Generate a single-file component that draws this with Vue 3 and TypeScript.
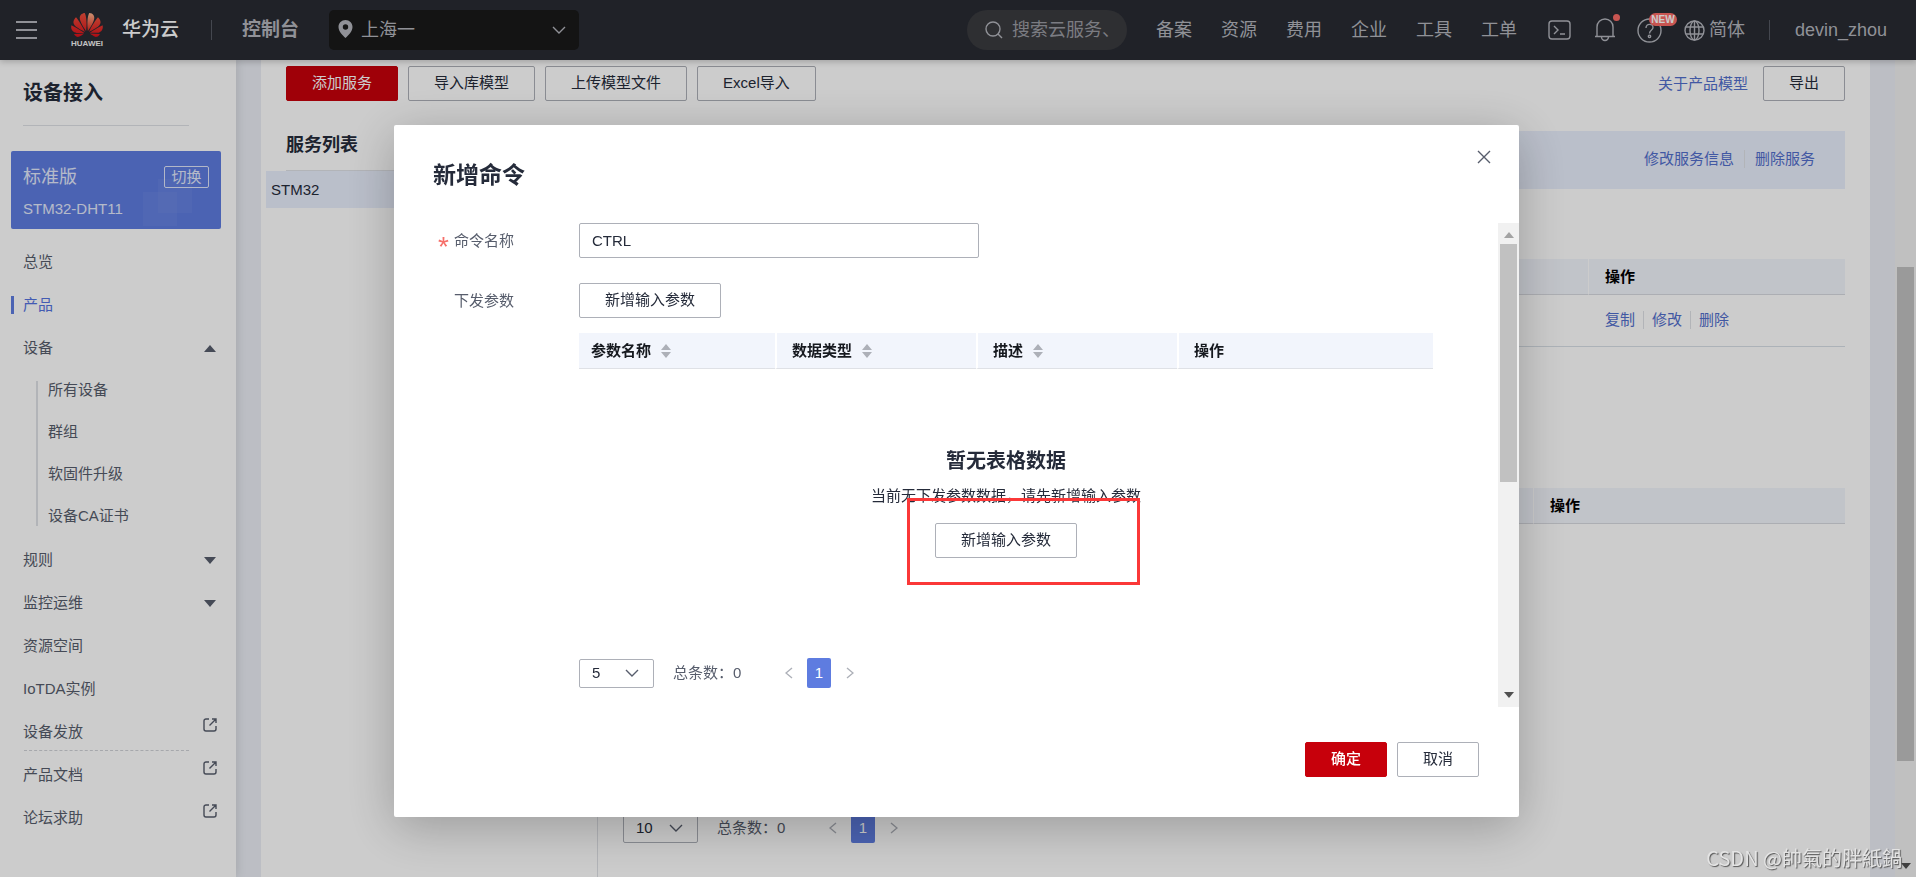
<script setup lang="ts">
import { ref } from 'vue'

interface MenuItem {
  label: string
  active?: boolean
  arrow?: 'up' | 'down'
  external?: boolean
  dashed?: boolean
  children?: string[]
}

const navLinks: string[] = ['备案', '资源', '费用', '企业', '工具', '工单']

const menu: MenuItem[] = [
  { label: '总览' },
  { label: '产品', active: true },
  { label: '设备', arrow: 'up', children: ['所有设备', '群组', '软固件升级', '设备CA证书'] },
  { label: '规则', arrow: 'down' },
  { label: '监控运维', arrow: 'down' },
  { label: '资源空间' },
  { label: 'IoTDA实例' },
  { label: '设备发放', external: true, dashed: true },
  { label: '产品文档', external: true },
  { label: '论坛求助', external: true },
]

const toolbar: string[] = ['导入库模型', '上传模型文件', 'Excel导入']

const paramColumns = [
  { label: '参数名称', sortable: true, cls: 'c-name' },
  { label: '数据类型', sortable: true, cls: 'c-type' },
  { label: '描述', sortable: true, cls: 'c-desc' },
  { label: '操作', sortable: false, cls: 'c-ops' },
]

const region = ref('上海一')
const commandName = ref('CTRL')
const modalPageSize = ref('5')
const pageSize = ref('10')
</script>

<template>
  <div class="shell">
    <header class="topbar">
      <button class="icon-btn burger" aria-label="菜单"><i></i><i></i><i></i></button>
      <a class="brand" href="#">
        <span class="logo">
          <svg viewBox="0 2.9 24 18.2" aria-hidden="true">
            <defs>
              <linearGradient id="petal" x1="0" y1="0" x2="0" y2="1">
                <stop offset="0" stop-color="#f0503c" />
                <stop offset="1" stop-color="#d8101a" />
              </linearGradient>
              <linearGradient id="petal-light" x1="0" y1="0" x2="0" y2="1">
                <stop offset="0" stop-color="#ffb48c" />
                <stop offset="1" stop-color="#e0281e" />
              </linearGradient>
            </defs>
            <path fill="url(#petal)" d="M3.67 6.14S1.82 7.91 1.72 9.78v.35c.08 1.51 1.22 2.4 1.22 2.4 1.83 1.79 6.26 4.04 7.3 4.55 0 0 .06.03.1-.01l.02-.04v-.04C7.52 10.8 3.67 6.14 3.67 6.14zM9.65 18.6c-.02-.08-.1-.08-.1-.08l-7.38.26c.8 1.43 2.15 2.53 3.56 2.2.96-.25 3.16-1.78 3.88-2.3.06-.05.04-.09.04-.09zm.08-.78C6.49 15.63.21 12.28.21 12.28c-.15.46-.2.9-.21 1.3v.07c0 1.07.4 1.82.4 1.82.8 1.69 2.34 2.2 2.34 2.2.7.3 1.4.31 1.4.31.12.02 4.4 0 5.54 0 .05 0 .08-.05.08-.05v-.06c0-.03-.03-.05-.03-.05zM9.06 3.19a3.42 3.42 0 00-2.57 3.15v.41c.03.6.16 1.05.16 1.05.66 2.9 3.86 7.65 4.55 8.65.05.05.1.03.1.03a.1.1 0 00.06-.1c1.06-10.6-1.11-13.42-1.11-13.42-.32.02-1.19.23-1.19.23z" />
            <path fill="url(#petal-light)" d="M17.36 5.46s-.49-1.8-2.44-2.28c0 0-.57-.14-1.17-.22 0 0-2.18 2.81-1.12 13.43.01.07.06.08.06.08.07.03.1-.03.1-.03.72-1.03 3.9-5.76 4.55-8.64 0 0 .36-1.4.02-2.34z" />
            <path fill="url(#petal)" d="M14.44 18.53s-.07 0-.09.05c0 0-.01.07.03.1.7.51 2.85 2 3.88 2.3 0 0 .16.05.43.06h.14c.69-.02 1.9-.37 3-2.26l-7.4-.25zm7.83-8.41c.14-2.06-1.94-3.97-1.94-3.98 0 0-3.85 4.66-6.67 10.8 0 0-.03.08.02.13l.04.01h.06c1.06-.53 5.46-2.77 7.28-4.54 0 0 1.15-.93 1.21-2.42zm1.52 2.14s-6.28 3.37-9.52 5.55c0 0-.05.04-.03.11 0 0 .03.06.07.06 1.16 0 5.56 0 5.67-.02 0 0 .57-.02 1.27-.29 0 0 1.56-.5 2.37-2.27 0 0 .73-1.45.17-3.14z" />
          </svg>
          <b>HUAWEI</b>
        </span>
        <span class="brand-name">华为云</span>
      </a>
      <span class="bar"></span>
      <a class="console" href="#">控制台</a>
      <div class="region">
        <svg class="pin" viewBox="0 0 15 18" aria-hidden="true">
          <path fill="#b4b6bd" fill-rule="evenodd" d="M7.5 0C3.6 0 .5 3.1.5 7c0 4.2 4.2 8.600 7 11 2.800-2.400 7-6.800 7-11 0-3.900-3.100-7-7-7zM7.500 4.300a2.700 2.700 0 1 1 0 5.400 2.700 2.700 0 0 1 0-5.400z" />
        </svg>
        <select v-model="region" aria-label="区域"><option>上海一</option></select>
        <svg class="chev" viewBox="0 0 14 8" aria-hidden="true"><path d="M1 1l6 6 6-6" /></svg>
      </div>

      <div class="top-right">
        <label class="search">
          <svg viewBox="0 0 18 18" aria-hidden="true"><circle cx="8" cy="8" r="7" /><path d="M13 13l4 4" /></svg>
          <input type="text" placeholder="搜索云服务、" aria-label="搜索" />
        </label>
        <nav class="top-nav">
          <a v-for="l in navLinks" :key="l" href="#">{{ l }}</a>
        </nav>
        <button class="icon-btn term" aria-label="命令行">
          <svg viewBox="0 0 23 20"><rect x="1" y="1" width="21" height="18" rx="3" /><path d="M6 6l4 4-4 4M12 14h5" /></svg>
        </button>
        <button class="icon-btn bell" aria-label="消息">
          <svg viewBox="0 0 22 24"><path d="M1 18.500h20M3 18.500V9a8 8 0 0 1 16 0v9.500M7.500 19a3.500 3.500 0 0 0 7 0" /></svg>
          <span class="dot"></span>
        </button>
        <button class="icon-btn help" aria-label="帮助">
          <svg viewBox="0 0 25 25"><circle cx="12.500" cy="12.500" r="11.500" /><path d="M9 10c0-5 7-4.500 7-.5 0 2.500-3.500 2.500-3.500 6" /><circle cx="12.500" cy="18.300" r="1.200" /></svg>
          <span class="new">NEW</span>
        </button>
        <button class="lang">
          <svg viewBox="0 0 21 21" aria-hidden="true"><circle cx="10.500" cy="10.500" r="9.500" /><ellipse cx="10.500" cy="10.500" rx="4.500" ry="9.500" /><path d="M10.500 1v19M2 7h17M2 14h17" /></svg>
          简体
        </button>
        <span class="bar"></span>
        <a class="user" href="#">devin_zhou</a>
      </div>
    </header>

    <div class="body">
      <aside class="sidebar">
        <h1>设备接入</h1>
        <section class="edition">
          <i class="deco d1"></i><i class="deco d2"></i>
          <div class="edition-row">
            <span class="edition-name">标准版</span>
            <button>切换</button>
          </div>
          <p>STM32-DHT11</p>
        </section>
        <nav class="menu">
          <template v-for="m in menu" :key="m.label">
            <a href="#" :class="{ active: m.active, dashed: m.dashed }">
              <span>{{ m.label }}</span>
              <svg v-if="m.arrow" class="tri" :class="m.arrow" viewBox="0 0 12 7" aria-hidden="true"><path d="M0 0h12L6 7z" /></svg>
              <svg v-if="m.external" class="ext" viewBox="0 0 14 14" aria-hidden="true"><path d="M6 1H3a2 2 0 0 0-2 2v8a2 2 0 0 0 2 2h8a2 2 0 0 0 2-2V8M6.500 7.500L13 1M9 1h4v4" /></svg>
            </a>
            <div v-if="m.children" class="submenu">
              <a v-for="c in m.children" :key="c" href="#">{{ c }}</a>
            </div>
          </template>
        </nav>
      </aside>

      <main class="panel">
        <div class="toolbar">
          <button class="btn primary">添加服务</button>
          <button v-for="t in toolbar" :key="t" class="btn">{{ t }}</button>
          <a class="about" href="#">关于产品模型</a>
          <button class="btn">导出</button>
        </div>
        <div class="split">
          <section class="services">
            <h2>服务列表</h2>
            <a class="service" href="#">STM32</a>
          </section>
          <section class="detail">
            <div class="detail-head links">
              <a href="#">修改服务信息</a><a href="#">删除服务</a>
            </div>
            <table class="grid props">
              <thead><tr><th></th><th class="ops">操作</th></tr></thead>
              <tbody>
                <tr>
                  <td></td>
                  <td><span class="links"><a href="#">复制</a><a href="#">修改</a><a href="#">删除</a></span></td>
                </tr>
              </tbody>
            </table>
            <table class="grid cmds">
              <thead><tr><th></th><th class="ops">操作</th></tr></thead>
            </table>
            <div class="pager">
              <span class="size">
                <select v-model="pageSize" aria-label="每页条数"><option>10</option></select>
                <svg viewBox="0 0 14 8" aria-hidden="true"><path d="M1 1l6 6 6-6" /></svg>
              </span>
              <span class="total">总条数：0</span>
              <button class="step" aria-label="上一页"><svg viewBox="0 0 8 12"><path d="M7 1L1 6l6 5" /></svg></button>
              <button class="page">1</button>
              <button class="step" aria-label="下一页"><svg viewBox="0 0 8 12"><path d="M1 1l6 5-6 5" /></svg></button>
            </div>
          </section>
        </div>
      </main>

      <div class="page-scroll">
        <div class="thumb"></div>
        <svg viewBox="0 0 10 6" aria-hidden="true"><path d="M0 0h10L5 6z" /></svg>
      </div>
    </div>

    <div class="mask">
      <section class="modal" role="dialog" aria-labelledby="modal-title">
        <header class="modal-head">
          <h2 id="modal-title">新增命令</h2>
          <button class="close" aria-label="关闭"><svg viewBox="0 0 14 14"><path d="M1 1l12 12M13 1L1 13" /></svg></button>
        </header>
        <div class="modal-body">
          <div class="form">
            <div class="row">
              <label for="cmd-name"><b>*</b>命令名称</label>
              <input id="cmd-name" v-model="commandName" type="text" />
            </div>
            <div class="row params">
              <span class="label">下发参数</span>
              <div class="field">
                <button class="btn">新增输入参数</button>
                <table class="param-table">
                  <thead>
                    <tr>
                      <th v-for="c in paramColumns" :key="c.label" :class="c.cls">
                        {{ c.label }}
                        <svg v-if="c.sortable" viewBox="0 0 10 14" aria-hidden="true"><path d="M5 0l5 6H0zM0 8h10l-5 6z" /></svg>
                      </th>
                    </tr>
                  </thead>
                </table>
                <div class="empty">
                  <h3>暂无表格数据</h3>
                  <p>当前无下发参数数据，请先新增输入参数</p>
                  <button class="btn">新增输入参数</button>
                  <span class="highlight"></span>
                </div>
                <div class="pager">
                  <span class="size">
                    <select v-model="modalPageSize" aria-label="每页条数"><option>5</option></select>
                    <svg viewBox="0 0 14 8" aria-hidden="true"><path d="M1 1l6 6 6-6" /></svg>
                  </span>
                  <span class="total">总条数：0</span>
                  <button class="step" aria-label="上一页"><svg viewBox="0 0 8 12"><path d="M7 1L1 6l6 5" /></svg></button>
                  <button class="page">1</button>
                  <button class="step" aria-label="下一页"><svg viewBox="0 0 8 12"><path d="M1 1l6 5-6 5" /></svg></button>
                </div>
              </div>
            </div>
          </div>
          <div class="modal-scroll">
            <svg class="up" viewBox="0 0 10 6" aria-hidden="true"><path d="M0 6h10L5 0z" /></svg>
            <div class="thumb"></div>
            <svg class="down" viewBox="0 0 10 6" aria-hidden="true"><path d="M0 0h10L5 6z" /></svg>
          </div>
        </div>
        <footer class="modal-foot">
          <button class="btn primary strong">确定</button>
          <button class="btn">取消</button>
        </footer>
      </section>
    </div>

    <div class="watermark">CSDN @帥氣的胖紙鍋</div>
  </div>
</template>

<style>
html,
body {
  margin: 0;
  overflow: hidden;
}
</style>

<style scoped>
.shell {
  height: 100vh;
  display: flex;
  flex-direction: column;
  overflow: hidden;
  background: #ebeef5;
  color: #252b3a;
  font: 15px/22px "Liberation Sans", "Noto Sans CJK SC", sans-serif;
}
.shell *,
.shell *::before,
.shell *::after {
  box-sizing: border-box;
}
h1, h2, h3, p {
  margin: 0;
}
a {
  color: inherit;
  text-decoration: none;
}
button, input, select {
  font: inherit;
  color: inherit;
  margin: 0;
  padding: 0;
  border: 0;
  background: none;
  appearance: none;
  outline: none;
}
svg {
  display: block;
  flex: none;
}

/* top bar */
.topbar {
  position: relative;
  z-index: 2;
  flex: none;
  height: 60px;
  display: flex;
  align-items: center;
  padding: 0 29px 0 16px;
  background: #282b33;
  color: #b4b6bd;
  font-size: 18px;
  line-height: 26px;
  white-space: nowrap;
  box-shadow: 0 2px 6px rgba(0, 0, 0, 0.2);
}
.burger {
  width: 21px;
  display: flex;
  flex-direction: column;
  gap: 6px;
}
.burger i {
  height: 2px;
  background: #b4b6bd;
}
.brand {
  display: flex;
  align-items: center;
  gap: 19px;
  margin-left: 34px;
}
.logo {
  display: flex;
  flex-direction: column;
  gap: 2px;
}
.logo svg {
  width: 32px;
  height: 24px;
}
.logo b {
  color: #f4f4f4;
  font-size: 8px;
  line-height: 9px;
}
.brand-name {
  color: #fff;
  font-size: 19px;
  font-weight: 500;
}
.bar {
  width: 1px;
  height: 20px;
  background: #565963;
}
.brand + .bar {
  margin-left: 32px;
}
.console {
  margin-left: 30px;
  font-size: 19px;
  font-weight: 700;
}
.region {
  position: relative;
  width: 250px;
  height: 40px;
  margin-left: 30px;
  border-radius: 5px;
  background: #191919;
}
.region select {
  width: 100%;
  height: 40px;
  padding-left: 32px;
}
.region .pin {
  position: absolute;
  left: 9px;
  top: 10px;
  width: 15px;
  height: 18px;
}
.region .chev {
  position: absolute;
  right: 13px;
  top: 16px;
  width: 14px;
  height: 8px;
}
.chev path,
.size path,
.step path,
.search svg,
.icon-btn svg,
.lang svg,
.ext path,
.close path {
  fill: none;
  stroke: currentColor;
  stroke-width: 1.4;
}
.top-right {
  margin-left: auto;
  display: flex;
  align-items: center;
}
.search {
  display: flex;
  align-items: center;
  gap: 9px;
  width: 160px;
  height: 40px;
  padding: 0 18px;
  border-radius: 20px;
  background: #3a3b3f;
}
.search svg {
  width: 18px;
  height: 18px;
}
.search input {
  flex: 1;
  min-width: 0;
}
.search input::placeholder {
  color: #9a9ca3;
  opacity: 1;
}
.top-nav {
  display: flex;
  gap: 29px;
  margin-left: 29px;
}
.icon-btn {
  position: relative;
}
.term {
  margin-left: 31px;
}
.term svg {
  width: 23px;
  height: 20px;
}
.bell {
  margin-left: 23px;
}
.bell svg {
  width: 22px;
  height: 24px;
}
.dot {
  position: absolute;
  right: -4px;
  top: -4px;
  width: 7px;
  height: 7px;
  border-radius: 50%;
  background: #fa6b66;
}
.help {
  margin-left: 21px;
}
.help svg {
  width: 25px;
  height: 25px;
}
.new {
  position: absolute;
  left: 12px;
  top: -5px;
  width: 28px;
  height: 13px;
  border-radius: 7px;
  background: #fa6b66;
  color: #fff;
  font-size: 10px;
  font-weight: 700;
  line-height: 13px;
}
.lang {
  display: flex;
  align-items: center;
  gap: 4px;
  margin: 0 24px 0 22px;
}
.lang svg {
  width: 21px;
  height: 21px;
}
.user {
  margin-left: 25px;
}

/* side bar */
.body {
  flex: 1;
  min-height: 0;
  display: flex;
}
.sidebar {
  flex: none;
  width: 236px;
  padding: 18px 15px 0 11px;
  background: #fff;
  box-shadow: 0 0 10px rgba(0, 0, 0, 0.15);
}
.sidebar h1 {
  width: 166px;
  height: 48px;
  margin: 0 0 25px 12px;
  border-bottom: 1px solid #dfe1e6;
  font-size: 20px;
  line-height: 30px;
}
.edition {
  position: relative;
  height: 78px;
  padding: 14px 12px 0;
  border-radius: 2px;
  background: #5e7ce0;
  color: #e3e9fc;
}
.edition-row {
  position: relative;
  display: flex;
  justify-content: space-between;
  align-items: center;
}
.edition-name {
  font-size: 18px;
  line-height: 24px;
}
.edition button {
  width: 45px;
  height: 22px;
  border: 1px solid #dfe5fa;
  border-radius: 2px;
  line-height: 20px;
}
.edition p {
  position: relative;
  margin-top: 9px;
  line-height: 22px;
}
.deco {
  position: absolute;
  width: 34px;
  height: 34px;
  background: rgba(255, 255, 255, 0.04);
}
.d1 {
  left: 132px;
  bottom: 3px;
}
.d2 {
  left: 147px;
  bottom: 16px;
}
.menu {
  margin-top: 11px;
  color: #575d6c;
}
.menu > a {
  position: relative;
  display: flex;
  justify-content: space-between;
  height: 43px;
  padding: 0 4px 0 12px;
  line-height: 43px;
}
.menu > a.active {
  color: #5472e0;
}
.menu > a.active::before {
  content: "";
  position: absolute;
  left: 0;
  top: 13px;
  width: 3px;
  height: 18px;
  background: #5e7ce0;
}
.menu > a.dashed::after {
  content: "";
  position: absolute;
  left: 13px;
  right: 32px;
  bottom: 2px;
  border-top: 1px dashed #d0d2d8;
}
.tri {
  width: 12px;
  height: 7px;
  margin: 19px 1px 0 0;
  fill: #575d6c;
}
.tri.up {
  transform: rotate(180deg);
}
.ext {
  width: 14px;
  height: 14px;
  margin-top: 8px;
}
.submenu {
  margin-left: 25px;
  padding: 0 0 1px 12px;
  background: linear-gradient(#dfe1e6, #dfe1e6) 0 12px / 2px 145px no-repeat;
}
.submenu a {
  display: block;
  line-height: 42px;
}

/* content panel */
.panel {
  flex: 1;
  min-width: 0;
  display: flex;
  flex-direction: column;
  margin: 0 25px;
  padding-top: 6px;
  background: #fff;
}
.toolbar {
  display: flex;
  align-items: center;
  gap: 10px;
  padding: 0 25px;
}
.btn {
  height: 35px;
  padding: 0 25px 2px;
  border: 1px solid #adb0b8;
  border-radius: 2px;
  background: #fff;
  white-space: nowrap;
}
.btn.primary {
  border-color: #c7000b;
  background: #c7000b;
  color: #fff;
}
.btn.strong {
  font-weight: 500;
}
.about {
  margin: 0 5px 0 auto;
  color: #526ecc;
}
.split {
  flex: 1;
  display: flex;
  margin-top: 30px;
}
.services {
  flex: none;
  width: 337px;
  padding-left: 5px;
  border-right: 1px solid #dfe1e6;
}
.services h2 {
  height: 40px;
  margin-left: 20px;
  border-bottom: 1px solid #dfe1e6;
  font-size: 18px;
  line-height: 28px;
}
.service {
  display: block;
  padding-left: 5px;
  background: #e9effd;
  line-height: 37px;
}
.detail {
  flex: 1;
  min-width: 0;
  padding: 0 25px;
}
.links {
  display: flex;
  align-items: center;
  color: #526ecc;
}
.links a {
  line-height: 18px;
}
.links a + a {
  margin-left: 8px;
  padding-left: 8px;
  border-left: 1px solid #dfe1e6;
}
.detail-head {
  justify-content: flex-end;
  height: 58px;
  padding: 0 30px 2px 0;
  background: #e9effd;
}
.detail-head.links a + a {
  margin-left: 10px;
  padding-left: 10px;
}
.grid {
  width: 100%;
  border-collapse: separate;
  border-spacing: 0;
  table-layout: fixed;
}
.grid th {
  height: 36px;
  padding: 0 16px;
  background: #f2f5fc;
  border-bottom: 1px solid #d8dae0;
  color: #000;
  font-weight: 700;
  text-align: left;
}
.grid th + th {
  border-left: 1px solid #fff;
}
.grid td {
  height: 52px;
  padding: 0 17px 2px;
  border-bottom: 1px solid #d8dfe6;
}
.props {
  margin-top: 70px;
}
.props .ops {
  width: 257px;
}
.cmds {
  margin-top: 141px;
}
.cmds .ops {
  width: 312px;
}
.detail .pager {
  margin-top: 289px;
}

.pager {
  display: flex;
  align-items: center;
  height: 30px;
  color: #575d6c;
}
.size {
  position: relative;
  width: 75px;
}
.size select {
  display: block;
  width: 75px;
  height: 29px;
  padding-left: 12px;
  border: 1px solid #adb0b8;
  border-radius: 2px;
  color: #252b3a;
}
.size svg {
  position: absolute;
  right: 15px;
  top: 10px;
  width: 14px;
  height: 8px;
}
.total {
  width: 94px;
  margin-left: 19px;
}
.step {
  width: 43px;
  display: flex;
  justify-content: center;
  color: #adb0b8;
}
.step svg {
  width: 8px;
  height: 12px;
}
.page {
  width: 24px;
  height: 30px;
  margin: 0 -3px;
  border-radius: 2px;
  background: #5e7ce0;
  color: #fff;
}

/* page scroll bar */
.page-scroll {
  flex: none;
  width: 21px;
  display: flex;
  flex-direction: column;
  justify-content: space-between;
  align-items: center;
  padding: 207px 0 8px;
  background: #f1f1f1;
}
.page-scroll .thumb {
  width: 17px;
  height: 494px;
  background: #c1c1c1;
}
.page-scroll svg {
  width: 10px;
  height: 6px;
  fill: #505050;
}

/* dialog */
.mask {
  position: fixed;
  inset: 0;
  z-index: 10;
  display: flex;
  justify-content: center;
  align-items: flex-start;
  padding: 125px 3px 0 0;
  background: rgba(0, 0, 0, 0.2);
}
.modal {
  width: 1125px;
  max-width: 96%;
  border-radius: 2px;
  background: #fff;
  box-shadow: 0 10px 50px rgba(0, 0, 0, 0.25);
}
.modal-head {
  display: flex;
  justify-content: space-between;
  height: 98px;
  padding: 25px 28px 0 39px;
}
.modal-head h2 {
  font-size: 23px;
  line-height: 50px;
}
.close {
  width: 14px;
  height: 14px;
  color: #575d6c;
}
.close svg {
  width: 14px;
  height: 14px;
}
.modal-body {
  display: flex;
  height: 484px;
}
.form {
  flex: 1;
  min-width: 0;
  padding: 0 65px 0 44px;
  overflow: hidden;
}
.row {
  display: flex;
  line-height: 35px;
}
.row > label,
.row > .label {
  flex: none;
  width: 141px;
  color: #575d6c;
}
.row label b {
  display: inline-block;
  width: 16px;
  color: #f66f6a;
  font: 28px/20px "Liberation Sans", sans-serif;
  vertical-align: -10px;
}
.row > .label {
  padding-left: 16px;
}
.row > input {
  width: 400px;
  height: 35px;
  padding: 0 12px;
  border: 1px solid #adb0b8;
  border-radius: 2px;
}
.params {
  margin-top: 25px;
}
.field {
  flex: 1;
  min-width: 0;
  line-height: 22px;
}
.field > .btn,
.empty .btn {
  display: block;
}
.param-table {
  width: 100%;
  margin-top: 15px;
  border-spacing: 0;
  table-layout: fixed;
}
.param-table th {
  height: 36px;
  padding: 0 12px;
  border-bottom: 1px solid #dfe1e6;
  background: #f2f5fc;
  color: #16191f;
  font-weight: 700;
  text-align: left;
}
.param-table th + th {
  padding-left: 15px;
  border-left: 2px solid #fff;
}
.param-table svg {
  display: inline-block;
  width: 10px;
  height: 14px;
  margin-left: 6px;
  fill: #adb0b8;
  vertical-align: -2px;
}
.c-name {
  width: 196px;
}
.c-type,
.c-desc {
  width: 201px;
}
.empty {
  position: relative;
  display: flex;
  flex-direction: column;
  align-items: center;
  margin: 77px 0 100px;
}
.empty h3 {
  font-size: 20px;
  line-height: 30px;
}
.empty p {
  margin: 9px 0 16px;
}
.highlight {
  position: absolute;
  left: calc(50% - 99px);
  top: 52px;
  width: 233px;
  height: 87px;
  border: 3px solid #fb3838;
}
.modal-scroll {
  flex: none;
  width: 21px;
  display: flex;
  flex-direction: column;
  align-items: center;
  padding: 9px 0;
  background: #f1f1f1;
}
.modal-scroll svg {
  width: 10px;
  height: 6px;
}
.modal-scroll .up {
  fill: #a3a3a3;
}
.modal-scroll .down {
  margin-top: auto;
  fill: #505050;
}
.modal-scroll .thumb {
  width: 17px;
  height: 238px;
  margin-top: 6px;
  background: #c1c1c1;
}
.modal-foot {
  display: flex;
  justify-content: flex-end;
  gap: 10px;
  padding: 35px 40px 40px;
}

.watermark {
  position: fixed;
  right: 14px;
  bottom: 4px;
  z-index: 20;
  color: #e4e4e4;
  font: 20px/30px "Noto Sans CJK TC", sans-serif;
  text-shadow: 1px 1px 1px #555;
}
</style>
